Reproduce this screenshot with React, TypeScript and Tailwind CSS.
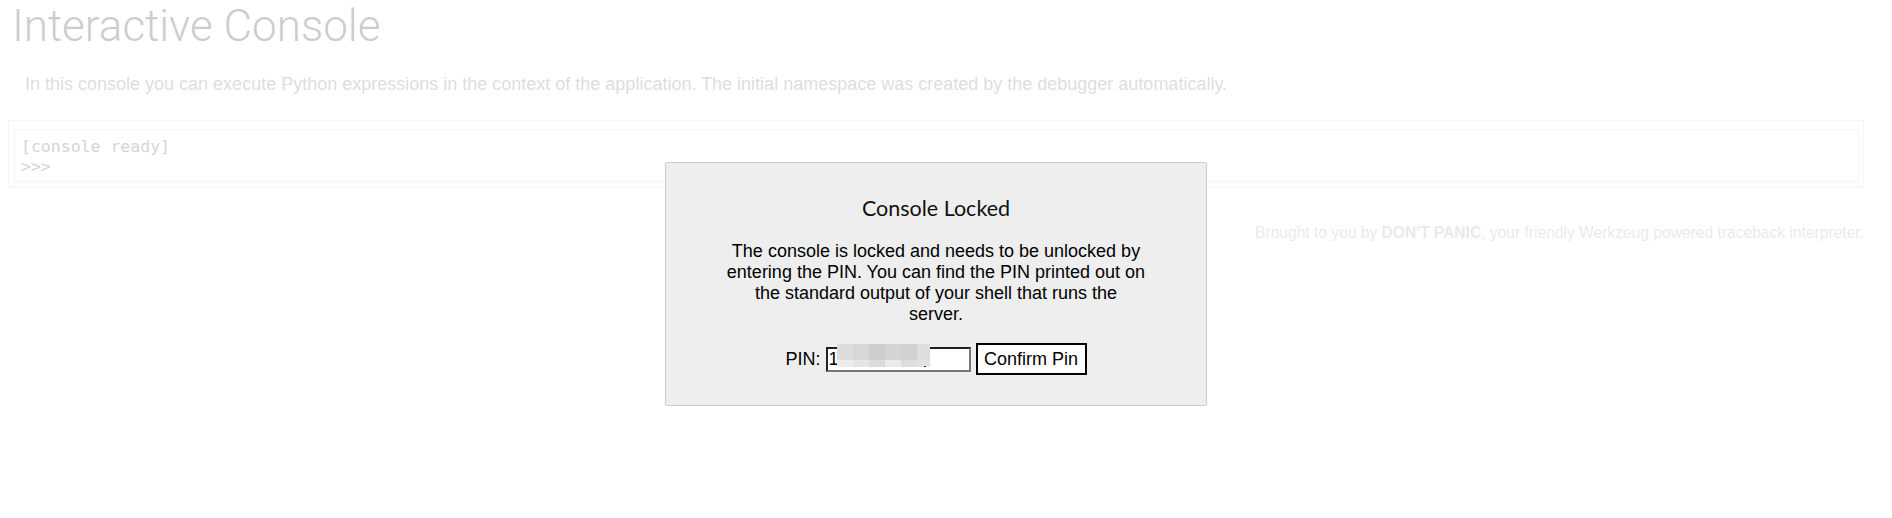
import React from "react";

const mosaicTop = ["#dcdcdc", "#d7d7d7", "#cecece", "#d4d4d4", "#d1d1d1", "#dddddd"];
const mosaicBottom = ["#ececec", "#e5e5e5", "#dbdbdb", "#ebebeb", "#dedede", "#e3e3e3"];

function Mosaic() {
  return (
    <div className="absolute left-[9px] top-[-5px] grid grid-cols-[16px_16px_16px_16px_16px_13px] grid-rows-[16px_7px]">
      {mosaicTop.map((c, i) => (
        <div key={"t" + i} style={{ backgroundColor: c }} />
      ))}
      {mosaicBottom.map((c, i) => (
        <div key={"b" + i} style={{ backgroundColor: c }} />
      ))}
    </div>
  );
}

export default function App() {
  return (
    <div className="relative min-h-[518px] w-[1872px] bg-white font-['Liberation_Sans',Arial,sans-serif]">
      <div className="flex flex-col pl-[8px]">
        <h1 className="m-0 pl-[4px] font-['Roboto',sans-serif] text-[44px] font-light leading-[52px] text-black">
          Interactive Console
        </h1>
        <div className="mt-[22px] pl-[17px] text-[18px] leading-[21px] text-[#555]">
          In this console you can execute Python expressions in the context of the application. The initial namespace was created by the debugger automatically.
        </div>
        <div className="mt-[25px] w-[1856px] border border-[#ccc] bg-[#fafafa] pt-[8px] pr-[4px] pb-[5px] pl-[5px]">
          <div className="flex flex-col border border-[#ccc] bg-white pt-[7px] pb-[4px] pl-[6px] font-['DejaVu_Sans_Mono',monospace] text-[16.5px] leading-[20px] text-[#222]">
            <span>[console ready]</span>
            <span>&gt;&gt;&gt;</span>
          </div>
        </div>
        <div className="mt-[36px] w-[1856px] text-right text-[15.6px] leading-[18px] text-[#86989b]">
          Brought to you by <b>DON'T PANIC</b>, your friendly Werkzeug powered traceback interpreter.
        </div>
      </div>

      <div className="absolute inset-0 flex justify-center bg-white/80 pt-[162px]">
        <div className="flex h-[244px] w-[542px] flex-col rounded-[2px] border border-[#ccc] bg-[#eee] px-[60px] pt-[12px] text-black">
          <h3 className="mt-[19px] text-center font-['Lato',sans-serif] text-[21.5px] font-normal leading-[28px] text-[#111]">Console Locked</h3>
          <p className="mt-[19px] text-center text-[18px] leading-[21px]">
            The console is locked and needs to be unlocked by entering the PIN. You can find the PIN printed out on the standard output of your shell that runs the server.
          </p>
          <form className="mt-[18px] flex items-center justify-center gap-[5px] text-[18px]" onSubmit={(e) => e.preventDefault()}>
            <span>PIN:</span>
            <div className="relative h-[25px] w-[145px] border-2 border-t-[#222] border-r-[#777] border-b-[#777] border-l-[#222] bg-white pl-[1px] leading-[21px]">
              1
              <Mosaic />
              <span className="absolute left-[96px] top-[17px] h-[1px] w-[2px] bg-[#333]" />
            </div>
            <button type="submit" className="h-[32px] w-[111px] border-2 border-black bg-white text-[18px] leading-[20px]">
              Confirm Pin
            </button>
          </form>
        </div>
      </div>
    </div>
  );
}
